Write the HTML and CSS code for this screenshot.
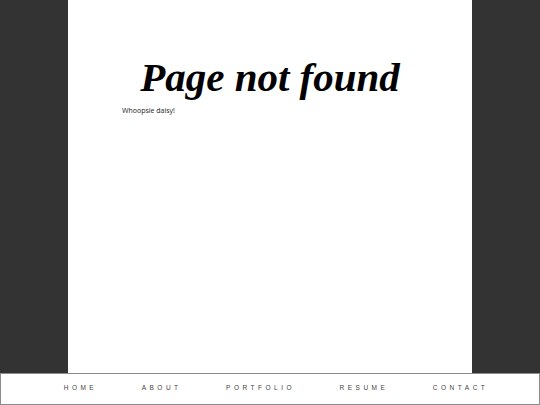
FILE: index.html
```html
<!DOCTYPE html>
<html lang="en">
<head>
<meta charset="utf-8">
<title>Page not found</title>
<link rel="stylesheet" href="styles.css">
</head>
<body>
<div class="app">
  <main class="page">
    <h1 class="title">Page not found</h1>
    <p class="subtitle">Whoopsie daisy!</p>
  </main>
  <nav class="nav">
    <a class="nav-link" href="#">HOME</a>
    <a class="nav-link" href="#">ABOUT</a>
    <a class="nav-link" href="#">PORTFOLIO</a>
    <a class="nav-link" href="#">RESUME</a>
    <a class="nav-link" href="#">CONTACT</a>
  </nav>
</div>
</body>
</html>
```

FILE: styles.css
```css
html, body {
  margin: 0;
  padding: 0;
  height: 100%;
}
body {
  background: #333333;
  font-family: "Open Sans", "Liberation Sans", sans-serif;
}
.app {
  display: flex;
  flex-direction: column;
  height: 100vh;
}
.page {
  flex: 1;
  width: 404px;
  margin: 0 auto;
  background: #ffffff;
  padding: 55px 0 0 54px;
  box-sizing: border-box;
}
.title {
  margin: 0;
  font-family: "Liberation Serif", "DejaVu Serif", serif;
  font-style: italic;
  font-weight: bold;
  font-size: 41px;
  line-height: 45px;
  color: #000;
  text-align: center;
  padding-right: 54px;
}
.subtitle {
  margin: 6px 0 0;
  font-size: 7px;
  color: #222;
}
.nav {
  height: 32px;
  box-sizing: border-box;
  border: 1px solid #8c8c8c;
  background: #fff;
  display: flex;
  align-items: center;
  justify-content: center;
  gap: 44.5px;
  padding: 0 0 3px 12px;
}
.nav-link {
  font-family: "Liberation Sans", "DejaVu Sans", sans-serif;
  font-size: 6.5px;
  letter-spacing: 3.5px;
  color: #444;
  text-decoration: none;
}
```
